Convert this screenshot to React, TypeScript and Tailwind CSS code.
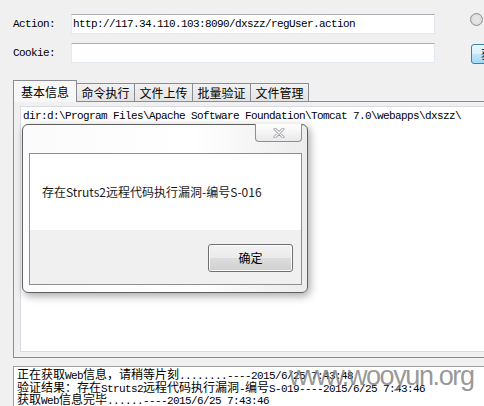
import React from "react";

const MONO = "font-['Liberation_Mono',monospace] text-[11px] tracking-[-0.6px]";
const CJK = "font-['Noto_Sans_CJK_SC',sans-serif] text-[12px]";

function Mixed({ text }: { text: string }) {
  const parts = text.split(/([\x20-\x7e]+)/).filter(Boolean);
  return (
    <>
      {parts.map((p, i) =>
        /^[\x20-\x7e]+$/.test(p) ? (
          <span key={i} className={`${MONO} leading-[12.5px]`}>
            {p}
          </span>
        ) : (
          <span key={i} className={`${CJK} leading-[12.5px]`}>
            {p}
          </span>
        ),
      )}
    </>
  );
}

const tabs = ["命令执行", "文件上传", "批量验证", "文件管理"];

const logs = [
  "正在获取Web信息，请稍等片刻........----2015/6/25 7:43:48",
  "验证结果：存在Struts2远程代码执行漏洞-编号S-019----2015/6/25 7:43:46",
  "获取Web信息完毕......----2015/6/25 7:43:46",
  "正在获取Web信息，请稍等片刻........",
];

export default function App() {
  return (
    <div className="relative flex h-[406px] w-[484px] flex-col overflow-hidden bg-[#f0f0f0] text-black">
      {/* form rows */}
      <div className="flex shrink-0 flex-col gap-[9px] pl-[13px] pt-[14px]">
        <div className="flex h-[20px] items-center">
          <span className={`w-[58px] shrink-0 ${MONO}`}>Action:</span>
          <div className="flex h-[20px] w-[364px] shrink-0 items-center border border-[#e3e9ef] border-t-[#abadb3] bg-white pl-[1px]">
            <span className={`${MONO} whitespace-pre`}>
              http://117.34.110.103:8090/dxszz/regUser.action
            </span>
          </div>
          <span className="ml-[35px] -mt-[10px] h-[13px] w-[13px] shrink-0 rounded-full border border-[#8e8f8f] bg-[radial-gradient(circle,#e6e6e6_30%,#d0d0d0_100%)]" />
        </div>
        <div className="flex h-[20px] items-center">
          <span className={`w-[58px] shrink-0 ${MONO}`}>Cookie:</span>
          <div className="h-[20px] w-[364px] shrink-0 border border-[#e3e9ef] border-t-[#abadb3] bg-white" />
          <button className="ml-[36px] mt-[2px] flex h-[20px] w-[60px] shrink-0 items-center rounded-[3px] border border-[#3c7fb1] bg-[linear-gradient(#eaf6fd_0%,#d9f0fc_50%,#bee6fd_51%,#a7d9f5_100%)] pl-[9px]">
            <span className={`${CJK} leading-[14px] whitespace-nowrap`}>获取信息</span>
          </button>
        </div>
      </div>

      {/* tabs */}
      <div className="mt-[17px] flex h-[21px] shrink-0 items-end pl-[13px]">
        <div className={`z-10 -mb-px flex h-[22px] w-[64px] items-center justify-center border border-b-0 border-[#898c95] bg-[#f7f7f7] ${CJK}`}>
          基本信息
        </div>
        {tabs.map((t) => (
          <div
            key={t}
            className={`flex h-[18px] w-[59px] items-center justify-center border border-b-0 border-[#898c95] bg-[linear-gradient(#f2f2f2,#e3e3e3)] -ml-px first:ml-0 ${CJK} leading-[14px]`}
          >
            {t}
          </div>
        ))}
      </div>

      {/* tab panel */}
      <div className="ml-[13px] h-[257px] w-[480px] shrink-0 border border-[#898c95] bg-[#f0f0f0] pb-[5px] pl-[6px] pt-[4px]">
        <div className="h-full border border-[#dadbe2] bg-white pl-[2px] pt-[3px]">
          <div className={`${MONO} whitespace-pre leading-[13px]`}>
            {"dir:d:\\Program Files\\Apache Software Foundation\\Tomcat 7.0\\webapps\\dxszz\\"}
          </div>
        </div>
      </div>

      {/* log */}
      <div className="ml-[13px] mt-[8px] min-h-0 flex-1 overflow-hidden border-l border-t border-[#a0a0a0] bg-white pl-[3px]">
        {logs.map((l, i) => (
          <div key={i} className="h-[12.5px] whitespace-pre leading-[12.5px]">
            <Mixed text={l} />
          </div>
        ))}
      </div>

      {/* watermark */}
      <div className="pointer-events-none absolute left-[289px] top-[361px] font-['Liberation_Sans',sans-serif] text-[27px] leading-[30px] tracking-[-1.4px] text-[#7d7d7d]/80">
        www.wooyun.org
      </div>

      {/* message box */}
      <div className="absolute left-[22px] top-[124px] flex h-[169px] w-[286px] flex-col rounded-[6px] border border-[#5f5f5f] bg-[linear-gradient(90deg,#fbfbfb,#ffffff_60%,#ececec)] pb-[7px] pl-[6px] pr-[5px] pt-[28px] shadow-[2px_3px_8px_rgba(0,0,0,0.35)]">
        <div className="absolute right-[5px] top-[-1px] flex h-[18px] w-[47px] items-center justify-center rounded-b-[4px] border border-t-0 border-[#8f8f8f] bg-[linear-gradient(#ffffff,#e9e9e9)]">
          <svg width="12" height="10" viewBox="0 0 12 10">
            <path d="M2 1 L10 9 M10 1 L2 9" stroke="#9a9da3" strokeWidth="3" strokeLinecap="round" />
            <path d="M2 1 L10 9 M10 1 L2 9" stroke="#ffffff" strokeWidth="1.2" strokeLinecap="round" />
          </svg>
        </div>
        <div className="flex flex-1 flex-col border border-[#8e8f8f]">
          <div className="flex h-[76px] items-center bg-white pl-[12px]">
            <span className={`${CJK} leading-[16px] text-[#1a1a1a]`}>存在Struts2远程代码执行漏洞-编号S-016</span>
          </div>
          <div className="flex flex-1 justify-end bg-[#f0f0f0] pr-[8px] pt-[14px]">
            <button className="flex h-[28px] w-[85px] items-center justify-center rounded-[3px] border border-[#707070] bg-[linear-gradient(#f2f2f2_0%,#ebebeb_50%,#dddddd_51%,#cfcfcf_100%)] shadow-[inset_0_0_0_1px_#fcfcfc]">
              <span className={`${CJK} leading-[14px]`}>确定</span>
            </button>
          </div>
        </div>
      </div>
    </div>
  );
}
